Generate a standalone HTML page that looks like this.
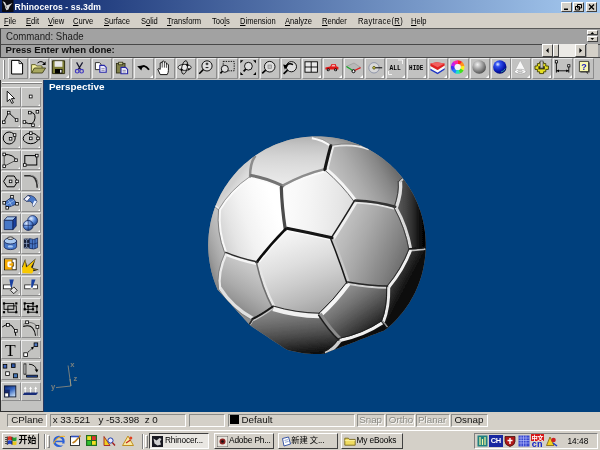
<!DOCTYPE html>
<html><head><meta charset="utf-8"><title>Rhinoceros - ss.3dm</title>
<style>
*{margin:0;padding:0;box-sizing:border-box}
html,body{width:600px;height:450px;overflow:hidden;background:#d4d0c8;font-family:"Liberation Sans","Noto Sans CJK SC",sans-serif;}
#root{position:relative;width:600px;height:450px;overflow:hidden;background:#d4d0c8;will-change:transform}
.abs{position:absolute}
#title{left:0;top:0;width:600px;height:13px;background:linear-gradient(90deg,#0a246a 0%,#a6caf0 100%)}
#title .t{position:absolute;left:14.6px;top:2.2px;font-weight:bold;font-size:8.6px;line-height:11px;color:#fff;white-space:nowrap;letter-spacing:0.1px}
.cap{position:absolute;top:1.6px;width:11px;height:10px;background:#d4d0c8;border:1px solid;border-color:#fff #404040 #404040 #fff}
#menu{left:0;top:13px;width:600px;height:15px;background:#d4d0c8}
#menu span{position:absolute;top:2.8px;font-size:8.7px;line-height:11px;color:#000;white-space:nowrap;transform:scaleX(0.87);transform-origin:0 0}
#menu u{text-decoration:underline;text-underline-offset:1px}
#cmd{left:0;top:28px;width:600px;height:16px;background:#a2a2a2;border-top:1px solid #585858;border-left:1px solid #404040}
#cmd span{position:absolute;left:4.5px;top:1.6px;font-size:10.3px;line-height:12px;color:#1a1a1a;white-space:nowrap;transform:scaleX(0.935);transform-origin:0 0}
#prm{left:0;top:44px;width:600px;height:13px;background:#a2a2a2;border-top:1px solid #484848;border-left:1px solid #404040}
#prm span{position:absolute;left:4.5px;top:-1.2px;font-size:9.6px;line-height:12px;font-weight:bold;color:#111;white-space:nowrap}
#tb{left:0;top:56.5px;width:600px;height:23.5px;background:#c2c2c1;border-top:1px solid #484848}
.tbtn{position:absolute;top:0.5px;width:20px;height:20.5px;background:#c2c2c1;border:1px solid;border-color:#ececec #8c8c8c #8c8c8c #ececec;overflow:hidden}
.tbtn svg,.lbtn svg{position:absolute;left:0;top:0}
#lt{left:0;top:80px;width:43.5px;height:331.5px;background:#c3c3c1;border-left:1px solid #303030;border-right:1px solid #283860;border-bottom:1px solid #303030}
.lbtn{position:absolute;width:20.2px;height:19.8px;background:#c3c3c1;border:1px solid;border-color:#ececec #8c8c8c #8c8c8c #ececec;overflow:hidden}
#vp{left:43.5px;top:80px;width:556.5px;height:331.5px;background:#00407d;overflow:hidden}
#vp .lab{position:absolute;left:5.5px;top:0.5px;font-weight:bold;font-size:9.9px;line-height:12px;color:#fff;white-space:nowrap}
#sb{left:0;top:411.5px;width:600px;height:18px;background:#d4d0c8}
.sbox{position:absolute;top:2px;height:13.5px;border:1px solid;border-color:#8c8c88 #fff #fff #8c8c88;font-size:9.8px;line-height:9.6px;color:#111;white-space:nowrap;padding-left:4px}
.sbox.dis{color:#8a8a84;text-shadow:0.6px 0.6px 0 #fff}
#tk{left:0;top:429.5px;width:600px;height:20.5px;background:#d4d0c8;border-top:1px solid #fff}
.kbtn{position:absolute;top:2px;height:16.5px;background:#d4d0c8;border:1px solid;border-color:#fff #404040 #404040 #fff;font-size:8.3px;line-height:13px;color:#000;white-space:nowrap;overflow:hidden;letter-spacing:-0.15px}
.kbtn.dn{border-color:#404040 #fff #fff #404040;background:#e9e7e2}
.kbtn span{position:absolute;top:0.5px}
</style></head><body><div id="root">
<div id="title" class="abs"><svg class="abs" style="left:2px;top:0px" width="11.5" height="12.4" viewBox="0 0 11.5 12.4"><rect width="11.5" height="12.4" fill="#0a0a12"/><path d="M0.6 1.3L3 2.2L4.6 5.6L10.4 3L7.6 6.6L6.4 9.6L4.4 10.2L3.4 8.2L2.6 5Z" fill="#d8d8d8"/><path d="M3.4 5.6L5 8.4" stroke="#606060" stroke-width="0.7"/></svg><div class="t">Rhinoceros - ss.3dm</div><div class="cap" style="left:560.8px"><svg width="9" height="8" style="position:absolute;left:0;top:0"><rect x="2" y="5.5" width="4" height="1.5" fill="#000"/></svg></div><div class="cap" style="left:572.6px"><svg width="9" height="8" style="position:absolute;left:0;top:0"><path d="M3.5 1.5h4v3.5h-4zM1.5 3.5h4v3.5h-4z" fill="#d4d0c8" stroke="#000" stroke-width="1"/></svg></div><div class="cap" style="left:586px"><svg width="9" height="8" style="position:absolute;left:0;top:0"><path d="M2 1.5L7 6.5M7 1.5L2 6.5" stroke="#000" stroke-width="1.3"/></svg></div></div>
<div id="menu" class="abs"><span style="left:4px"><u>F</u>ile</span><span style="left:25.5px"><u>E</u>dit</span><span style="left:48px"><u>V</u>iew</span><span style="left:73px"><u>C</u>urve</span><span style="left:104px"><u>S</u>urface</span><span style="left:141px">S<u>o</u>lid</span><span style="left:166.5px"><u>T</u>ransform</span><span style="left:212px">Too<u>l</u>s</span><span style="left:239.5px"><u>D</u>imension</span><span style="left:284.5px"><u>A</u>nalyze</span><span style="left:322px"><u>R</u>ender</span><span style="left:357.5px"><span style="position:static;letter-spacing:0.45px;transform:none">Raytrace(<u>R</u>)</span></span><span style="left:410.5px"><u>H</u>elp</span></div>
<div id="cmd" class="abs"><span>Command: Shade</span><div class="abs" style="left:586.3px;top:0.7px;width:10.5px;height:5.6px;background:#d4d0c8;border:1px solid;border-color:#fff #404040 #404040 #fff;"><svg class="abs" style="left:0px;top:0px" width="9" height="4" viewBox="0 0 9 4"><path d="M2.5 3L4.3 1L6.1 3Z" fill="#000"/></svg></div><div class="abs" style="left:586.3px;top:7px;width:10.5px;height:5.6px;background:#d4d0c8;border:1px solid;border-color:#fff #404040 #404040 #fff;"><svg class="abs" style="left:0px;top:0px" width="9" height="4" viewBox="0 0 9 4"><path d="M2.5 1L4.3 3L6.1 1Z" fill="#000"/></svg></div></div>
<div id="prm" class="abs"><span>Press Enter when done:</span><div class="abs" style="left:540.5px;top:-0.6px;width:11px;height:13px;background:#d4d0c8;border:1px solid;border-color:#fff #404040 #404040 #fff;"><svg class="abs" style="left:0px;top:0px" width="9" height="11" viewBox="0 0 9 11"><path d="M5.6 3L3 5.5L5.6 8Z" fill="#000"/></svg></div><div class="abs" style="left:551.5px;top:-0.6px;width:23px;height:13px;background:#eceae6"></div><div class="abs" style="left:552.3px;top:-0.6px;width:5.5px;height:13px;background:#d4d0c8;border:1px solid;border-color:#fff #404040 #404040 #fff;"></div><div class="abs" style="left:574.3px;top:-0.6px;width:11px;height:13px;background:#d4d0c8;border:1px solid;border-color:#fff #404040 #404040 #fff;"><svg class="abs" style="left:0px;top:0px" width="9" height="11" viewBox="0 0 9 11"><path d="M3.4 3L6 5.5L3.4 8Z" fill="#000"/></svg></div><div class="abs" style="left:586.3px;top:-0.6px;width:10.7px;height:13px;background:#d4d0c8"></div></div>
<div id="tb" class="abs"><div class="abs" style="left:2.5px;top:2px;width:2px;height:19px;border-left:1px solid #fff;border-right:1px solid #808080"></div><div class="tbtn" style="left:8.20px"><svg width="20" height="20" viewBox="0 0 20 20"><path d="M2.6 1.4H10L13.6 4.6V15H2.6Z" fill="#fff" stroke="#000" stroke-width="1"/><path d="M10 1.4V4.6H13.6" fill="none" stroke="#000" stroke-width="0.8"/></svg></div><div class="tbtn" style="left:29.17px"><svg width="20" height="20" viewBox="0 0 20 20"><path d="M1.6 14V5.6H5.4L6.6 7H12V9" fill="#f4f0a0" stroke="#5a5a20" stroke-width="0.9"/><path d="M1.6 14L4.4 9H15.6L12.4 14Z" fill="#a8a860" stroke="#404018" stroke-width="0.9"/><path d="M7.5 4Q11 1 14 4.2" fill="none" stroke="#000" stroke-width="1"/><path d="M15.6 2.4V6H12Z" fill="#000"/></svg></div><div class="tbtn" style="left:50.14px"><svg width="20" height="20" viewBox="0 0 20 20"><path d="M1.4 1.8H13.6V14.6H1.4Z" fill="#80803a" stroke="#303010" stroke-width="1"/><rect x="3.6" y="2.2" width="7.8" height="5.6" fill="#e8e8e8"/><rect x="4" y="10" width="7.4" height="4.4" fill="#000"/><rect x="9" y="10.8" width="1.6" height="2.8" fill="#e8e8e8"/><path d="M19 15V19H15Z" fill="#fff"/></svg></div><div class="tbtn" style="left:71.11px"><svg width="20" height="20" viewBox="0 0 20 20"><path d="M4.6 3.4L8.6 10.6M10.6 3.4L6.2 10.6" stroke="#181830" stroke-width="1.2" fill="none"/><circle cx="5.2" cy="12.2" r="1.8" fill="none" stroke="#4038c0" stroke-width="1.2"/><circle cx="9.6" cy="12.2" r="1.8" fill="none" stroke="#4038c0" stroke-width="1.2"/></svg></div><div class="tbtn" style="left:92.08px"><svg width="20" height="20" viewBox="0 0 20 20"><path d="M2.4 3.6H6.4L8 5.2V10.6H2.4Z" fill="#fff" stroke="#202020" stroke-width="0.9"/><path d="M6.8 6.4H11.2L13.2 8.4V13.2H6.8Z" fill="#e8e8f8" stroke="#2828a8" stroke-width="1.1"/><path d="M8.4 9.6h3.2M8.4 11.4h3.2" stroke="#707090" stroke-width="0.7"/></svg></div><div class="tbtn" style="left:113.05px"><svg width="20" height="20" viewBox="0 0 20 20"><rect x="2.4" y="4.4" width="8.6" height="9.6" fill="#808048" stroke="#303018" stroke-width="0.9"/><rect x="4.6" y="3.2" width="4.2" height="2.6" fill="#c8c890" stroke="#303018" stroke-width="0.8"/><path d="M7 8.4H11.6L13.6 10.4V14.8H7Z" fill="#e8e8f8" stroke="#2828a8" stroke-width="1.1"/><path d="M8.6 11.4h3.2M8.6 13h3.2" stroke="#707090" stroke-width="0.7"/></svg></div><div class="tbtn" style="left:134.02px"><svg width="20" height="20" viewBox="0 0 20 20"><path d="M5.5 9.2Q9 4.2 14 10.8" fill="none" stroke="#000" stroke-width="1.9"/><path d="M2.2 7.2L7.6 6.4L6.4 11.6Z" fill="#000"/><path d="M19 15V19H15Z" fill="#fff"/></svg></div><div class="tbtn" style="left:154.99px"><svg width="20" height="20" viewBox="0 0 20 20"><path d="M4.2 15.6L1.8 10.2Q2.6 8.8 4.2 10.4V4Q5.2 2.8 6.2 4V2.6Q7.2 1.4 8.4 2.6V3.4Q9.6 2.4 10.4 3.8V5Q11.8 4.4 12.4 5.8V11.4Q12.4 13.6 11.2 15.6Z" fill="#fff" stroke="#000" stroke-width="0.9"/><path d="M6.2 4V8.6M8.4 3.4V8.6M10.4 5V8.8" stroke="#000" stroke-width="0.7"/></svg></div><div class="tbtn" style="left:175.96px"><svg width="20" height="20" viewBox="0 0 20 20"><ellipse cx="7.6" cy="8.4" rx="6.6" ry="3" fill="#e8e8e8" stroke="#000" stroke-width="0.8"/><ellipse cx="7.6" cy="8.4" rx="2.8" ry="6.8" fill="none" stroke="#000" stroke-width="0.8" transform="rotate(12 7.6 8.4)"/><path d="M9.6 4.4L12 6.6L9.2 7.2Z M3.4 9.6L6.2 10.2L4 12.2Z M10.8 9.2L13.6 9.6 L11.4 11.6Z" fill="#000"/></svg></div><div class="tbtn" style="left:196.93px"><svg width="20" height="20" viewBox="0 0 20 20"><circle cx="9.0" cy="6.9" r="5.1" fill="#dedede" stroke="#000" stroke-width="0.9"/><path d="M9 3.6V6.2M7.6 4.9H10.4M7.6 8.6H10.4" stroke="#000" stroke-width="0.9"/><path d="M5.4 10.5L1.2 14.8" stroke="#000" stroke-width="1.6"/></svg></div><div class="tbtn" style="left:217.90px"><svg width="20" height="20" viewBox="0 0 20 20"><rect x="4.2" y="2.4" width="11" height="9.4" fill="none" stroke="#000" stroke-width="0.9" stroke-dasharray="1.4 1.1"/><circle cx="5.8" cy="9.8" r="3.5" fill="#dedede" stroke="#000" stroke-width="0.9"/><path d="M3.4 12.3L1.4 14.4" stroke="#000" stroke-width="1.6"/></svg></div><div class="tbtn" style="left:238.87px"><svg width="20" height="20" viewBox="0 0 20 20"><path d="M0.4 1.2H3.4L0.4 4.2Z M16 1.2H13L16 4.2Z M0.4 16H3.4L0.4 13Z M16 16H13L16 13Z" fill="#000"/><circle cx="8.4" cy="7.2" r="3.9" fill="#dedede" stroke="#000" stroke-width="0.9"/><path d="M5.8 10.1L3.6 12.4" stroke="#000" stroke-width="1.6"/></svg></div><div class="tbtn" style="left:259.84px"><svg width="20" height="20" viewBox="0 0 20 20"><circle cx="8.7" cy="7.7" r="5.3" fill="#dedede" stroke="#000" stroke-width="0.9"/><rect x="7" y="6" width="3.4" height="3.4" fill="#c0c0c0" stroke="#888" stroke-width="0.7"/><path d="M4.7 11.2L1.2 14.4" stroke="#000" stroke-width="1.6"/></svg></div><div class="tbtn" style="left:280.81px"><svg width="20" height="20" viewBox="0 0 20 20"><circle cx="9.4" cy="7.7" r="5.1" fill="#dedede" stroke="#000" stroke-width="0.9"/><path d="M5.6 11.1L1.6 14.8" stroke="#000" stroke-width="1.6"/><path d="M3.2 8.6Q6 3 11 5.6" fill="none" stroke="#000" stroke-width="1.6"/><path d="M1.2 5.4L6.4 6.6L2.8 10.4Z" fill="#000"/></svg></div><div class="tbtn" style="left:301.78px"><svg width="20" height="20" viewBox="0 0 20 20"><rect x="2" y="2.8" width="12.4" height="10.4" fill="#e8e8e8" stroke="#000" stroke-width="0.9"/><path d="M8.2 2.8V13.2M2 8H14.4" stroke="#000" stroke-width="0.9"/><path d="M19 15V19H15Z" fill="#fff"/></svg></div><div class="tbtn" style="left:322.75px"><svg width="20" height="20" viewBox="0 0 20 20"><path d="M1.4 10.6V8.4L6.2 7.6L7.6 5H11.6L12.6 7.6L14.4 8V10.6Z" fill="#e01818"/><path d="M8.2 5.8H10.8L11.4 7.6H7.4Z" fill="#f8b0b0"/><circle cx="4.2" cy="10.8" r="1.5" fill="#101010"/><circle cx="11.6" cy="10.8" r="1.5" fill="#101010"/><circle cx="4.2" cy="10.8" r="0.6" fill="#ddd"/><circle cx="11.6" cy="10.8" r="0.6" fill="#ddd"/><path d="M19 15V19H15Z" fill="#fff"/></svg></div><div class="tbtn" style="left:343.72px"><svg width="20" height="20" viewBox="0 0 20 20"><path d="M1.4 7.4L9 4L15.6 8.4L8.4 12.2Z" fill="#b8b8b8" stroke="#909090" stroke-width="0.6"/><path d="M1.4 7.4L8.5 12" stroke="#18a828" stroke-width="1.2"/><path d="M8.5 12L15.6 8.6" stroke="#e02020" stroke-width="1.2"/><circle cx="8.5" cy="12.2" r="1.5" fill="#fff" stroke="#000" stroke-width="1"/><path d="M19 15V19H15Z" fill="#fff"/></svg></div><div class="tbtn" style="left:364.69px"><svg width="20" height="20" viewBox="0 0 20 20"><circle cx="8" cy="8.8" r="5.2" fill="#d8d8d8" stroke="#8088a0" stroke-width="0.8"/><circle cx="8" cy="8.8" r="1.3" fill="#e8e060" stroke="#404000" stroke-width="0.8"/><path d="M9.4 8.8H16.2" stroke="#000" stroke-width="1"/><path d="M19 15V19H15Z" fill="#fff"/></svg></div><div class="tbtn" style="left:385.66px"><svg width="20" height="20" viewBox="0 0 20 20"><text x="8.2" y="11.2" font-family="Liberation Mono, monospace" font-weight="bold" font-size="7.2" text-anchor="middle" fill="#000" textLength="11.4" lengthAdjust="spacingAndGlyphs">ALL</text><path d="M11 1H15.5V5" fill="none" stroke="#fff" stroke-width="0.8"/><path d="M1.5 12V15.5H5" fill="none" stroke="#fff" stroke-width="0.8"/><path d="M19 15V19H15Z" fill="#fff"/></svg></div><div class="tbtn" style="left:406.63px"><svg width="20" height="20" viewBox="0 0 20 20"><text x="8.2" y="11.2" font-family="Liberation Mono, monospace" font-weight="bold" font-size="7.2" text-anchor="middle" fill="#000" textLength="14.2" lengthAdjust="spacingAndGlyphs">HIDE</text><path d="M19 15V19H15Z" fill="#fff"/></svg></div><div class="tbtn" style="left:427.60px"><svg width="20" height="20" viewBox="0 0 20 20"><path d="M1.4 9.4L8.6 13.4L15.6 9V10.8L8.6 15.2L1.4 11.2Z" fill="#2038c8"/><path d="M1.4 7L8.6 11L15.6 6.6V9L8.6 13.4L1.4 9.4Z" fill="#f8f8f8"/><path d="M1.4 4.6L7.6 3.2L15.6 4.4V6.6L8.6 11L1.4 7Z" fill="#e02020"/><path d="M1.4 4.6L7.6 3.2L15.6 4.4L8.6 8.2Z" fill="#f06060"/><path d="M19 15V19H15Z" fill="#fff"/></svg></div><div class="tbtn" style="left:448.57px"><svg width="20" height="20" viewBox="0 0 20 20"><path d="M7.70 1.20A6.8 6.8 0 0 1 12.33 3.02L9.81 5.73A3.1 3.1 0 0 0 7.70 4.90Z" fill="#ff2020"/><path d="M12.07 2.79A6.8 6.8 0 0 1 14.45 7.16L10.78 7.61A3.1 3.1 0 0 0 9.69 5.63Z" fill="#ff9020"/><path d="M14.40 6.82A6.8 6.8 0 0 1 13.41 11.69L10.30 9.68A3.1 3.1 0 0 0 10.75 7.46Z" fill="#f8f020"/><path d="M13.59 11.40A6.8 6.8 0 0 1 9.70 14.50L8.61 10.96A3.1 3.1 0 0 0 10.38 9.55Z" fill="#40e020"/><path d="M10.03 14.39A6.8 6.8 0 0 1 5.06 14.27L6.50 10.86A3.1 3.1 0 0 0 8.76 10.91Z" fill="#20e0c0"/><path d="M5.37 14.39A6.8 6.8 0 0 1 1.65 11.10L4.94 9.41A3.1 3.1 0 0 0 6.64 10.91Z" fill="#2080ff"/><path d="M1.81 11.40A6.8 6.8 0 0 1 1.07 6.49L4.68 7.31A3.1 3.1 0 0 0 5.02 9.55Z" fill="#4030f0"/><path d="M1.00 6.82A6.8 6.8 0 0 1 3.59 2.58L5.83 5.53A3.1 3.1 0 0 0 4.65 7.46Z" fill="#c020f0"/><path d="M3.33 2.79A6.8 6.8 0 0 1 8.04 1.21L7.85 4.90A3.1 3.1 0 0 0 5.71 5.63Z" fill="#ff20a0"/><circle cx="7.7" cy="8" r="3.1" fill="#f4f4f4"/><path d="M19 15V19H15Z" fill="#fff"/></svg></div><div class="tbtn" style="left:469.54px"><svg width="20" height="20" viewBox="0 0 20 20"><defs><radialGradient id="gs" cx="0.38" cy="0.32" r="0.7"><stop offset="0" stop-color="#f0f0f0"/><stop offset="0.5" stop-color="#a0a0a0"/><stop offset="1" stop-color="#505050"/></radialGradient></defs><circle cx="8.2" cy="8" r="6.8" fill="url(#gs)"/><path d="M19 15V19H15Z" fill="#fff"/></svg></div><div class="tbtn" style="left:490.51px"><svg width="20" height="20" viewBox="0 0 20 20"><defs><radialGradient id="bs" cx="0.35" cy="0.3" r="0.75"><stop offset="0" stop-color="#e8f0ff"/><stop offset="0.25" stop-color="#3050f0"/><stop offset="0.7" stop-color="#0818b0"/><stop offset="1" stop-color="#000860"/></radialGradient></defs><circle cx="7.8" cy="8" r="6.7" fill="url(#bs)"/><path d="M9 13Q12 12.4 13.2 9.6" stroke="#30a0a0" stroke-width="0.9" fill="none"/><path d="M19 15V19H15Z" fill="#fff"/></svg></div><div class="tbtn" style="left:511.48px"><svg width="20" height="20" viewBox="0 0 20 20"><path d="M8.2 1.2L2.4 12.6Q8.2 16.4 14.2 12.6Z" fill="#f8f8f8" stroke="#b0b0b0" stroke-width="0.6"/><ellipse cx="8.2" cy="12.6" rx="5.8" ry="2.3" fill="#fff" stroke="#a0a0a0" stroke-width="0.7"/><ellipse cx="8.2" cy="12.6" rx="2.8" ry="1" fill="#e0e0e0" stroke="#909090" stroke-width="0.6"/><path d="M19 15V19H15Z" fill="#fff"/></svg></div><div class="tbtn" style="left:532.45px"><svg width="20" height="20" viewBox="0 0 20 20"><path d="M2 7H4.4V4.6H6.6V3H10.6V4.6H12.8V7H15.4V10.4H12.8V12.8H10.6V14.6H6.6V12.8H4.4V10.4H2Z" fill="#e8e020" stroke="#404000" stroke-width="0.9"/><rect x="5.4" y="7.2" width="6.4" height="3.2" fill="#303010"/><rect x="7.2" y="2" width="2.8" height="7" fill="#c8c8c8" stroke="#505050" stroke-width="0.7"/><path d="M19 15V19H15Z" fill="#fff"/></svg></div><div class="tbtn" style="left:553.42px"><svg width="20" height="20" viewBox="0 0 20 20"><path d="M2.4 3.6V13.6M14.8 7.6V13.6M2.4 11.8H14.8" stroke="#000" stroke-width="0.9" fill="none"/><path d="M2.6 11.8L5 10.4V13.2Z M14.6 11.8L12.2 10.4V13.2Z" fill="#000"/><rect x="1.3" y="1.7" width="2.2" height="2.2" fill="#fff" stroke="#000" stroke-width="0.8"/><rect x="13.7" y="5.7" width="2.2" height="2.2" fill="#fff" stroke="#000" stroke-width="0.8"/><path d="M19 15V19H15Z" fill="#fff"/></svg></div><div class="tbtn" style="left:574.39px"><svg width="20" height="20" viewBox="0 0 20 20"><path d="M5.4 3.4H14.6V13.6H12.8L13.4 15.4L11 13.6H5.4Z" fill="#404040"/><path d="M4.4 2.4H13.6V12.6H4.4Z" fill="#f8f8b0" stroke="#202020" stroke-width="0.8"/><text x="9" y="11" font-family="Liberation Sans, sans-serif" font-weight="bold" font-size="9" text-anchor="middle" fill="#2020c0">?</text></svg></div></div>
<div id="lt" class="abs"><div class="abs" style="left:0.5px;top:1.5px;width:40px;height:2px;border-top:1px solid #fff;border-bottom:1px solid #808080"></div><div class="lbtn" style="left:-0.20px;top:7.00px"><svg width="20" height="20" viewBox="0 0 20 20"><path d="M5.2 3.2V13.6L7.8 11.2L9.8 15.4L11.4 14.6L9.4 10.6H12.6Z" fill="#fff" stroke="#000" stroke-width="0.9"/></svg></div><div class="lbtn" style="left:20.25px;top:7.00px"><svg width="20" height="20" viewBox="0 0 20 20"><rect x="7.3" y="7.1" width="2.8" height="2.8" fill="#fff" stroke="#000" stroke-width="0.8"/><path d="M19 15V19H15Z" fill="#fff"/></svg></div><div class="lbtn" style="left:-0.20px;top:28.05px"><svg width="20" height="20" viewBox="0 0 20 20"><path d="M1.6 13.4L6.7 3.6L14.6 11" stroke="#000" fill="none" stroke-width="0.9"/><rect x="0.5" y="11.9" width="2.6" height="2.6" fill="#fff" stroke="#000" stroke-width="0.8"/><rect x="5.4" y="2.3" width="2.6" height="2.6" fill="#fff" stroke="#000" stroke-width="0.8"/><rect x="13.3" y="9.7" width="2.6" height="2.6" fill="#fff" stroke="#000" stroke-width="0.8"/><path d="M19 15V19H15Z" fill="#fff"/></svg></div><div class="lbtn" style="left:20.25px;top:28.05px"><svg width="20" height="20" viewBox="0 0 20 20"><path d="M2.4 13Q12 18 13 9Q13.4 3 7.8 3.6" stroke="#000" fill="none" stroke-width="1"/><rect x="1.1" y="11.7" width="2.6" height="2.6" fill="#fff" stroke="#000" stroke-width="0.8"/><rect x="9.7" y="14.9" width="2.6" height="2.6" fill="#fff" stroke="#000" stroke-width="0.8"/><rect x="14.1" y="1.5" width="2.6" height="2.6" fill="#fff" stroke="#000" stroke-width="0.8"/><rect x="6.5" y="2.3" width="2.6" height="2.6" fill="#fff" stroke="#000" stroke-width="0.8"/><path d="M19 15V19H15Z" fill="#fff"/></svg></div><div class="lbtn" style="left:-0.20px;top:49.10px"><svg width="20" height="20" viewBox="0 0 20 20"><circle cx="7.2" cy="8" r="6" stroke="#000" fill="none" stroke-width="1"/><rect x="7.3" y="7.5" width="2.6" height="2.6" fill="#fff" stroke="#000" stroke-width="0.8"/><rect x="11.3" y="3.7" width="2.6" height="2.6" fill="#fff" stroke="#000" stroke-width="0.8"/><path d="M19 15V19H15Z" fill="#fff"/></svg></div><div class="lbtn" style="left:20.25px;top:49.10px"><svg width="20" height="20" viewBox="0 0 20 20"><ellipse cx="8.8" cy="8.4" rx="7.6" ry="5.3" stroke="#000" fill="none" stroke-width="1"/><rect x="7.5" y="7.1" width="2.6" height="2.6" fill="#fff" stroke="#000" stroke-width="0.8"/><rect x="7.5" y="1.8" width="2.6" height="2.6" fill="#fff" stroke="#000" stroke-width="0.8"/><rect x="14.7" y="7.1" width="2.6" height="2.6" fill="#fff" stroke="#000" stroke-width="0.8"/><path d="M19 15V19H15Z" fill="#fff"/></svg></div><div class="lbtn" style="left:-0.20px;top:70.15px"><svg width="20" height="20" viewBox="0 0 20 20"><path d="M2.2 3.4Q12 3.4 14 9.2" stroke="#000" fill="none" stroke-width="1"/><path d="M2.2 3.4V15.2L14 9.2" stroke="#000" fill="none" stroke-width="0.6"/><rect x="0.9" y="2.1" width="2.6" height="2.6" fill="#fff" stroke="#000" stroke-width="0.8"/><rect x="0.9" y="13.9" width="2.6" height="2.6" fill="#fff" stroke="#000" stroke-width="0.8"/><rect x="12.7" y="7.9" width="2.6" height="2.6" fill="#fff" stroke="#000" stroke-width="0.8"/><path d="M19 15V19H15Z" fill="#fff"/></svg></div><div class="lbtn" style="left:20.25px;top:70.15px"><svg width="20" height="20" viewBox="0 0 20 20"><rect x="2.8" y="4.6" width="12" height="9.4" stroke="#000" fill="none" stroke-width="1"/><rect x="1.5" y="12.7" width="2.6" height="2.6" fill="#fff" stroke="#000" stroke-width="0.8"/><rect x="13.5" y="3.3" width="2.6" height="2.6" fill="#fff" stroke="#000" stroke-width="0.8"/><path d="M19 15V19H15Z" fill="#fff"/></svg></div><div class="lbtn" style="left:-0.20px;top:91.20px"><svg width="20" height="20" viewBox="0 0 20 20"><path d="M1.6 9.4L5 4H12.2L15.6 9.4L12.2 14.8H5Z" stroke="#000" fill="none" stroke-width="1"/><rect x="7.3" y="8.1" width="2.6" height="2.6" fill="#fff" stroke="#000" stroke-width="0.8"/><rect x="13.7" y="8.1" width="2.6" height="2.6" fill="#fff" stroke="#000" stroke-width="0.8"/><path d="M19 15V19H15Z" fill="#fff"/></svg></div><div class="lbtn" style="left:20.25px;top:91.20px"><svg width="20" height="20" viewBox="0 0 20 20"><path d="M2.2 3.8H8Q15 4 15.2 15.8" fill="none" stroke="#303030" stroke-width="1.5"/><path d="M8.6 3.2Q15.8 4 16 12" fill="none" stroke="#909090" stroke-width="1"/><path d="M19 15V19H15Z" fill="#fff"/></svg></div><div class="lbtn" style="left:-0.20px;top:112.25px"><svg width="20" height="20" viewBox="0 0 20 20"><path d="M2.2 9.8L10 3.8L15 10.8L5.2 14.8Z" fill="#4878c8" stroke="#102050" stroke-width="0.8"/><path d="M6 6.8L10 12.8M3.6 12.2L12.4 7.2" stroke="#c0d8f8" stroke-width="0.6"/><rect x="0.9" y="8.5" width="2.6" height="2.6" fill="#fff" stroke="#000" stroke-width="0.8"/><rect x="8.7" y="2.5" width="2.6" height="2.6" fill="#fff" stroke="#000" stroke-width="0.8"/><rect x="13.7" y="9.5" width="2.6" height="2.6" fill="#fff" stroke="#000" stroke-width="0.8"/><rect x="3.9" y="13.5" width="2.6" height="2.6" fill="#fff" stroke="#000" stroke-width="0.8"/><path d="M19 15V19H15Z" fill="#fff"/></svg></div><div class="lbtn" style="left:20.25px;top:112.25px"><svg width="20" height="20" viewBox="0 0 20 20"><path d="M1.8 6.2L6 2.4Q13 2 14.8 8.6L11.4 13.8Q10.6 7 5 8.4Z" fill="#4878c8" stroke="#102050" stroke-width="0.7"/><path d="M1.8 6.2L6 2.4L8.6 4.2L5 8.4Z" fill="#f4f4ff" stroke="#102050" stroke-width="0.6"/><path d="M11.4 13.8L14.8 8.6L12.6 7.6L10.6 11Z" fill="#e8f0ff"/><path d="M19 15V19H15Z" fill="#fff"/></svg></div><div class="lbtn" style="left:-0.20px;top:133.30px"><svg width="20" height="20" viewBox="0 0 20 20"><path d="M2.2 6.2H11V15.6H2.2Z" fill="#4878c8" stroke="#102050" stroke-width="0.8"/><path d="M2.2 6.2L5.2 2.8H14.2L11 6.2Z" fill="#a8c8f0" stroke="#102050" stroke-width="0.8"/><path d="M11 6.2L14.2 2.8V12L11 15.6Z" fill="#1840a0" stroke="#102050" stroke-width="0.8"/><path d="M19 15V19H15Z" fill="#fff"/></svg></div><div class="lbtn" style="left:20.25px;top:133.30px"><svg width="20" height="20" viewBox="0 0 20 20"><defs><radialGradient id="sp" cx="0.35" cy="0.3" r="0.8"><stop offset="0" stop-color="#e0ecff"/><stop offset="0.5" stop-color="#5888d8"/><stop offset="1" stop-color="#183878"/></radialGradient></defs><circle cx="10.6" cy="6.6" r="5" fill="url(#sp)" stroke="#102050" stroke-width="0.7"/><circle cx="6.2" cy="11.4" r="5" fill="url(#sp)" stroke="#102050" stroke-width="0.7"/><path d="M6.2 6.4V16.4M1.2 11.4H11.2" stroke="#102050" stroke-width="0.6"/><path d="M19 15V19H15Z" fill="#fff"/></svg></div><div class="lbtn" style="left:-0.20px;top:154.35px"><svg width="20" height="20" viewBox="0 0 20 20"><path d="M2.2 6V11.6A6.2 3 0 0 0 14.6 11.6V6Z" fill="#4878c8" stroke="#102050" stroke-width="0.8"/><ellipse cx="8.4" cy="6" rx="6.2" ry="3" fill="#a8c8f0" stroke="#102050" stroke-width="0.8"/><ellipse cx="8.4" cy="3.2" rx="3" ry="1.3" fill="#d8d8d8" stroke="#202020" stroke-width="0.8"/><ellipse cx="8.4" cy="11.4" rx="2.6" ry="1.2" fill="#a8c8f0"/><path d="M19 15V19H15Z" fill="#fff"/></svg></div><div class="lbtn" style="left:20.25px;top:154.35px"><svg width="20" height="20" viewBox="0 0 20 20"><path d="M1.8 3.6H7.6V13.4H1.8Z" fill="#182038"/><path d="M1.8 3.6L4.6 5V12L1.8 13.4M7.6 3.6L4.6 5M7.6 13.4L4.6 12M1.8 8.4H7.6" stroke="#a8c0e8" stroke-width="0.6" fill="none"/><path d="M7.6 3.6Q12 5.6 15.6 3V12.6Q12 15 7.6 13.4Z" fill="#4878c8" stroke="#102050" stroke-width="0.7"/><path d="M10.4 4.6V14M13 4.2V13.8M7.6 8.4Q12 10 15.6 7.8" stroke="#102050" stroke-width="0.6" fill="none"/><path d="M19 15V19H15Z" fill="#fff"/></svg></div><div class="lbtn" style="left:-0.20px;top:175.40px"><svg width="20" height="20" viewBox="0 0 20 20"><rect x="2.5" y="3" width="11.7" height="10.8" fill="#fff" stroke="#201800" stroke-width="0.9"/><path d="M2.9 3.4H10.2V6.4H11.6V10.2H10.2V13.4H2.9Z" fill="#f4a800"/><path d="M9.4 5.6H7Q5.4 5.6 5.4 7V9.6Q5.4 11.2 7 11.2H9.4V9.4H7.4V7.4H9.4Z" fill="#fff"/><path d="M10.2 3.4V6.4H11.6V10.2H10.2V13.4" fill="none" stroke="#201800" stroke-width="0.6"/><path d="M19 15V19H15Z" fill="#fff"/></svg></div><div class="lbtn" style="left:20.25px;top:175.40px"><svg width="20" height="20" viewBox="0 0 20 20"><path d="M0.4 17L0.2 11.3L3.2 3.5L5.1 10.3L13.5 3L10.5 12.3L16.4 13.8L11.4 15.2L10 17.6Z" fill="#f8c800"/><path d="M3.2 3.5L5.1 10.3L4 11.6Z M13.5 3L10.5 12.3L9 11.2Z M16.4 13.8L11.4 15.2L11 13.6Z" fill="#181830"/><path d="M0.2 11.3L3.2 3.5M5.1 10.3L13.5 3M10.5 12.3L16.4 13.8" stroke="#202020" stroke-width="0.7" fill="none"/><path d="M19 15V19H15Z" fill="#fff"/></svg></div><div class="lbtn" style="left:-0.20px;top:196.45px"><svg width="20" height="20" viewBox="0 0 20 20"><rect x="1.5" y="7.9" width="7.9" height="3.9" fill="#fff" stroke="#202020" stroke-width="0.8"/><path d="M7.4 2.5H11.8L9.8 9.9H8.7Z" fill="#1840a0"/><path d="M11.8 9.9L15.2 13.3L11.8 16.7L8.4 13.3Z" fill="#e4e4e4" stroke="#000" stroke-width="0.8"/><path d="M19 15V19H15Z" fill="#fff"/></svg></div><div class="lbtn" style="left:20.25px;top:196.45px"><svg width="20" height="20" viewBox="0 0 20 20"><rect x="2.7" y="7.9" width="12.7" height="3.9" fill="#fff" stroke="#202020" stroke-width="0.8"/><rect x="8.6" y="7.4" width="2.2" height="5" fill="#d4d0c8"/><path d="M9.5 2.5H13.5L10.5 10.4H9.1Z" fill="#1840a0"/><path d="M19 15V19H15Z" fill="#fff"/></svg></div><div class="lbtn" style="left:-0.20px;top:217.50px"><svg width="20" height="20" viewBox="0 0 20 20"><rect x="2" y="4.4" width="9.8" height="5.9" fill="none" stroke="#000" stroke-width="0.9"/><rect x="5.9" y="6.9" width="8.4" height="6.3" fill="none" stroke="#000" stroke-width="0.9"/><rect x="0.9" y="3.3" width="2.2" height="2.2" fill="#000"/><rect x="13.2" y="3.3" width="2.2" height="2.2" fill="#000"/><rect x="0.9" y="12.1" width="2.2" height="2.2" fill="#000"/><rect x="13.2" y="12.1" width="2.2" height="2.2" fill="#000"/><path d="M19 15V19H15Z" fill="#fff"/></svg></div><div class="lbtn" style="left:20.25px;top:217.50px"><svg width="20" height="20" viewBox="0 0 20 20"><rect x="2.7" y="4.4" width="8.3" height="5.9" fill="none" stroke="#000" stroke-width="0.9"/><rect x="6.1" y="7.3" width="8.8" height="5.9" fill="none" stroke="#000" stroke-width="0.9"/><rect x="1.6" y="3.3" width="2.2" height="2.2" fill="#000"/><rect x="9.9" y="3.3" width="2.2" height="2.2" fill="#000"/><rect x="1.6" y="9.2" width="2.2" height="2.2" fill="#000"/><rect x="9.9" y="9.2" width="2.2" height="2.2" fill="#000"/><rect x="5.0" y="6.2" width="2.2" height="2.2" fill="#000"/><rect x="13.8" y="6.2" width="2.2" height="2.2" fill="#000"/><rect x="5.0" y="12.1" width="2.2" height="2.2" fill="#000"/><rect x="13.8" y="12.1" width="2.2" height="2.2" fill="#000"/><path d="M19 15V19H15Z" fill="#fff"/></svg></div><div class="lbtn" style="left:-0.20px;top:238.55px"><svg width="20" height="20" viewBox="0 0 20 20"><path d="M0.2 7Q6 2.6 10 6Q13.6 9 13.8 15.8" stroke="#000" fill="none" stroke-width="1"/><rect x="4.5" y="3.5" width="2.8" height="2.8" fill="#fff" stroke="#000" stroke-width="0.8"/><rect x="12.4" y="9.4" width="2.8" height="2.8" fill="#fff" stroke="#000" stroke-width="0.8"/><path d="M19 15V19H15Z" fill="#fff"/></svg></div><div class="lbtn" style="left:20.25px;top:238.55px"><svg width="20" height="20" viewBox="0 0 20 20"><path d="M1.2 6.4Q8 4.6 10.6 8Q13.2 11 13.5 15.8" stroke="#000" fill="none" stroke-width="1.1"/><path d="M1.2 4.4Q5 1.6 9 2.6Q14.8 4 15.4 8V15.8" fill="none" stroke="#505050" stroke-width="0.7"/><rect x="3.7" y="0.9" width="2.8" height="2.8" fill="#fff" stroke="#000" stroke-width="0.8"/><rect x="14.0" y="5.5" width="2.8" height="2.8" fill="#fff" stroke="#000" stroke-width="0.8"/><path d="M19 15V19H15Z" fill="#fff"/></svg></div><div class="lbtn" style="left:-0.20px;top:259.60px"><svg width="20" height="20" viewBox="0 0 20 20"><text x="8.4" y="14.6" font-family="Liberation Serif, serif" font-size="17.5" text-anchor="middle" fill="#000">T</text></svg></div><div class="lbtn" style="left:20.25px;top:259.60px"><svg width="20" height="20" viewBox="0 0 20 20"><path d="M6.2 11L11 6.6" stroke="#000" stroke-width="1" stroke-dasharray="1.8 1.2"/><path d="M12 5.6L8.8 6.6L10.8 8.8Z" fill="#000"/><rect x="1.8" y="11.8" width="3.6" height="3.6" fill="#fff" stroke="#000" stroke-width="0.8"/><rect x="12.1" y="1.9" width="3.6" height="3.6" fill="#5078c0" stroke="#000" stroke-width="0.8"/><path d="M19 15V19H15Z" fill="#fff"/></svg></div><div class="lbtn" style="left:-0.20px;top:280.65px"><svg width="20" height="20" viewBox="0 0 20 20"><rect x="1.2" y="2.5" width="3.6" height="3.6" fill="#4068c0" stroke="#000" stroke-width="0.8"/><rect x="9.5" y="1.8" width="3.6" height="3.6" fill="#3058a8" stroke="#000" stroke-width="0.8"/><rect x="3.7" y="9.8" width="3.6" height="3.6" fill="#fff" stroke="#000" stroke-width="0.8"/><rect x="11.5" y="11.8" width="4.0" height="4.0" fill="#4878b8" stroke="#000" stroke-width="0.8"/><path d="M19 15V19H15Z" fill="#fff"/></svg></div><div class="lbtn" style="left:20.25px;top:280.65px"><svg width="20" height="20" viewBox="0 0 20 20"><rect x="2" y="1.9" width="1.9" height="10.3" fill="#fff" stroke="#000" stroke-width="0.8"/><rect x="4.6" y="13.2" width="10.8" height="1.9" fill="#2850b0" stroke="#000" stroke-width="0.8"/><path d="M7 2.2Q13.6 2.4 14.6 8.4" stroke="#000" fill="none" stroke-width="0.9"/><path d="M14.9 10.6L12.6 7.6L16.4 7.4Z" fill="#000"/><path d="M19 15V19H15Z" fill="#fff"/></svg></div><div class="lbtn" style="left:-0.20px;top:301.70px"><svg width="20" height="20" viewBox="0 0 20 20"><defs><linearGradient id="an" x1="0.2" y1="0" x2="0.8" y2="1"><stop offset="0" stop-color="#0c2c80"/><stop offset="0.45" stop-color="#3868c0"/><stop offset="1" stop-color="#c8e0f8"/></linearGradient></defs><rect x="2.5" y="2.9" width="11.3" height="11" fill="url(#an)" stroke="#101830" stroke-width="0.9"/><path d="M2.5 6.6H7.8V13.9H2.5Z" fill="#102060" fill-opacity="0.85"/><rect x="2.8" y="10" width="3.6" height="3.9" fill="#fff" stroke="#101830" stroke-width="0.7"/><path d="M19 15V19H15Z" fill="#fff"/></svg></div><div class="lbtn" style="left:20.25px;top:301.70px"><svg width="20" height="20" viewBox="0 0 20 20"><path d="M2.4 9.6H16.2L14.2 12H0.8Z" fill="#182c78"/><path d="M3.2 9.4V5.4M8.6 9.4V5.4M13.7 9.4V5.4" stroke="#fff" stroke-width="1"/><path d="M3.2 3.4L1.8 6H4.6Z M8.6 3.4L7.2 6H10Z M13.7 3.4L12.3 6H15.1Z" fill="#fff"/><path d="M19 15V19H15Z" fill="#fff"/></svg></div></div>
<div id="vp" class="abs"><svg class="abs" style="left:0;top:0" width="556.5" height="331.5" viewBox="43.5 80 556.5 331.5"><defs><clipPath id="bc"><path d="M425.3 245.2L425.2 249.0L425.0 252.8L424.7 256.6L424.2 260.3L423.6 264.1L422.9 267.8L422.1 271.5L421.1 275.2L420.0 278.8L418.7 282.4L417.4 286.0L415.9 289.5L414.3 292.9L412.6 296.3L410.7 299.6L408.8 302.9L406.7 306.0L404.5 309.2L402.2 312.2L399.8 315.1L397.4 318.0L394.8 320.8L392.1 323.5L389.3 326.1L386.4 328.5L383.3 330.7L379.6 332.1L376.0 333.4L372.5 334.8L369.0 336.1L365.6 337.5L362.1 338.8L358.7 340.1L355.4 341.4L352.0 342.7L348.6 344.0L345.2 345.3L341.8 346.6L338.3 347.9L334.8 349.2L331.3 350.6L327.7 352.0L324.1 353.4L320.3 353.9L316.5 354.0L312.7 353.9L308.9 353.7L305.1 353.4L301.4 352.9L297.6 352.3L293.9 351.6L290.2 350.8L286.5 349.8L283.2 347.7L280.0 345.5L276.8 343.5L273.7 341.4L270.6 339.4L267.5 337.3L264.5 335.3L261.4 333.3L258.4 331.3L255.4 329.3L252.3 327.3L249.4 325.1L247.0 322.4L244.5 319.7L242.1 317.1L239.7 314.4L237.2 311.7L234.8 309.0L232.3 306.3L229.9 303.6L227.4 300.9L224.9 298.1L222.3 295.3L219.7 292.4L217.1 289.5L215.6 286.0L214.3 282.4L213.0 278.8L211.9 275.2L210.9 271.5L210.1 267.8L209.4 264.1L208.8 260.3L208.3 256.6L208.0 252.8L207.8 249.0L207.7 245.2L207.8 241.4L208.0 237.6L208.3 233.8L208.8 230.1L209.4 226.3L210.1 222.6L210.9 218.9L211.9 215.2L213.0 211.6L214.3 208.0L215.6 204.4L217.1 200.9L218.7 197.5L220.4 194.1L222.3 190.8L224.2 187.5L226.3 184.4L228.5 181.2L230.8 178.2L233.2 175.3L235.6 172.4L238.2 169.6L240.9 166.9L243.7 164.3L246.6 161.9L249.5 159.5L252.5 157.2L255.7 155.0L258.8 152.9L262.1 151.0L265.4 149.1L268.8 147.4L272.2 145.8L275.7 144.3L279.3 143.0L282.9 141.7L286.5 140.6L290.2 139.6L293.9 138.8L297.6 138.1L301.4 137.5L305.1 137.0L308.9 136.7L312.7 136.5L316.5 136.4L320.3 136.5L324.1 136.7L327.9 137.0L331.6 137.5L335.4 138.1L339.1 138.8L342.8 139.6L346.5 140.6L350.1 141.7L353.7 143.0L357.3 144.3L360.8 145.8L364.2 147.4L367.6 149.1L370.9 151.0L374.2 152.9L377.3 155.0L380.5 157.2L383.5 159.5L386.4 161.9L389.3 164.3L392.1 166.9L394.8 169.6L397.4 172.4L399.8 175.3L402.2 178.2L404.5 181.2L406.7 184.4L408.8 187.5L410.7 190.8L412.6 194.1L414.3 197.5L415.9 200.9L417.4 204.4L418.7 208.0L420.0 211.6L421.1 215.2L422.1 218.9L422.9 222.6L423.6 226.3L424.2 230.1L424.7 233.8L425.0 237.6L425.2 241.4Z"/></clipPath><linearGradient id="g_lefthex" gradientUnits="userSpaceOnUse" x1="215.8" y1="232.7" x2="290.9" y2="206.9"><stop offset="0.00" stop-color="#cfcfcf"/><stop offset="0.20" stop-color="#e4e4e4"/><stop offset="0.40" stop-color="#f2f2f2"/><stop offset="0.60" stop-color="#fafafa"/><stop offset="0.80" stop-color="#ffffff"/><stop offset="1.00" stop-color="#ffffff"/></linearGradient><linearGradient id="g_toppent" gradientUnits="userSpaceOnUse" x1="356.1" y1="208.8" x2="278.7" y2="202.2"><stop offset="0.00" stop-color="#dadada"/><stop offset="0.20" stop-color="#e5e5e5"/><stop offset="0.40" stop-color="#ededed"/><stop offset="0.60" stop-color="#f4f4f4"/><stop offset="0.80" stop-color="#f9f9f9"/><stop offset="1.00" stop-color="#fcfcfc"/></linearGradient><linearGradient id="g_center" gradientUnits="userSpaceOnUse" x1="317.8" y1="316.9" x2="286.2" y2="227.3"><stop offset="0.00" stop-color="#9d9d9d"/><stop offset="0.20" stop-color="#b7b7b7"/><stop offset="0.40" stop-color="#cccccc"/><stop offset="0.60" stop-color="#dedede"/><stop offset="0.80" stop-color="#ececec"/><stop offset="1.00" stop-color="#f8f8f8"/></linearGradient><linearGradient id="g_righthex" gradientUnits="userSpaceOnUse" x1="406.6" y1="260.4" x2="333.8" y2="228.4"><stop offset="0.00" stop-color="#6a6a6a"/><stop offset="0.20" stop-color="#828282"/><stop offset="0.40" stop-color="#969696"/><stop offset="0.60" stop-color="#a9a9a9"/><stop offset="0.80" stop-color="#b9b9b9"/><stop offset="1.00" stop-color="#c7c7c7"/></linearGradient><linearGradient id="g_llpent" gradientUnits="userSpaceOnUse" x1="231.2" y1="308.9" x2="260.0" y2="262.5"><stop offset="0.00" stop-color="#838383"/><stop offset="0.20" stop-color="#999999"/><stop offset="0.40" stop-color="#ababab"/><stop offset="0.60" stop-color="#b9b9b9"/><stop offset="0.80" stop-color="#c6c6c6"/><stop offset="1.00" stop-color="#d1d1d1"/></linearGradient><linearGradient id="g_bottom" gradientUnits="userSpaceOnUse" x1="304.5" y1="356.5" x2="298.9" y2="302.6"><stop offset="0.00" stop-color="#060606"/><stop offset="0.20" stop-color="#2a2a2a"/><stop offset="0.40" stop-color="#4c4c4c"/><stop offset="0.60" stop-color="#676767"/><stop offset="0.80" stop-color="#7e7e7e"/><stop offset="1.00" stop-color="#919191"/></linearGradient><linearGradient id="g_lrpent" gradientUnits="userSpaceOnUse" x1="370.8" y1="331.8" x2="338.8" y2="286.2"><stop offset="0.00" stop-color="#1b1b1b"/><stop offset="0.20" stop-color="#3b3b3b"/><stop offset="0.40" stop-color="#575757"/><stop offset="0.60" stop-color="#707070"/><stop offset="0.80" stop-color="#858585"/><stop offset="1.00" stop-color="#989898"/></linearGradient><linearGradient id="g_topleft" gradientUnits="userSpaceOnUse" x1="293.4" y1="134.9" x2="292.1" y2="189.2"><stop offset="0.00" stop-color="#afafaf"/><stop offset="0.20" stop-color="#c5c5c5"/><stop offset="0.40" stop-color="#d4d4d4"/><stop offset="0.60" stop-color="#dedede"/><stop offset="0.80" stop-color="#e6e6e6"/><stop offset="1.00" stop-color="#ececec"/></linearGradient><linearGradient id="g_topright" gradientUnits="userSpaceOnUse" x1="389.7" y1="160.9" x2="334.7" y2="190.9"><stop offset="0.00" stop-color="#6c6c6c"/><stop offset="0.20" stop-color="#878787"/><stop offset="0.40" stop-color="#9b9b9b"/><stop offset="0.60" stop-color="#acacac"/><stop offset="0.80" stop-color="#b9b9b9"/><stop offset="1.00" stop-color="#c5c5c5"/></linearGradient><linearGradient id="g_upleft" gradientUnits="userSpaceOnUse" x1="236.6" y1="177.4" x2="246.4" y2="185.0"><stop offset="0.00" stop-color="#cfcfcf"/><stop offset="0.20" stop-color="#d5d5d5"/><stop offset="0.40" stop-color="#dadada"/><stop offset="0.60" stop-color="#dedede"/><stop offset="0.80" stop-color="#e2e2e2"/><stop offset="1.00" stop-color="#e6e6e6"/></linearGradient><linearGradient id="g_left" gradientUnits="userSpaceOnUse" x1="205.0" y1="256.2" x2="233.7" y2="246.0"><stop offset="0.00" stop-color="#888888"/><stop offset="0.20" stop-color="#9d9d9d"/><stop offset="0.40" stop-color="#ababab"/><stop offset="0.60" stop-color="#b7b7b7"/><stop offset="0.80" stop-color="#c1c1c1"/><stop offset="1.00" stop-color="#c9c9c9"/></linearGradient><linearGradient id="g_lowleft" gradientUnits="userSpaceOnUse" x1="233.6" y1="306.5" x2="237.5" y2="302.0"><stop offset="0.00" stop-color="#8e8e8e"/><stop offset="0.20" stop-color="#929292"/><stop offset="0.40" stop-color="#959595"/><stop offset="0.60" stop-color="#989898"/><stop offset="0.80" stop-color="#9c9c9c"/><stop offset="1.00" stop-color="#9f9f9f"/></linearGradient><linearGradient id="g_rightedge" gradientUnits="userSpaceOnUse" x1="426.9" y1="221.8" x2="392.5" y2="221.7"><stop offset="0.00" stop-color="#000000"/><stop offset="0.20" stop-color="#090909"/><stop offset="0.40" stop-color="#292929"/><stop offset="0.60" stop-color="#414141"/><stop offset="0.80" stop-color="#545454"/><stop offset="1.00" stop-color="#656565"/></linearGradient><linearGradient id="g_rightlow" gradientUnits="userSpaceOnUse" x1="409.4" y1="281.1" x2="392.7" y2="272.2"><stop offset="0.00" stop-color="#0c0c0c"/><stop offset="0.20" stop-color="#181818"/><stop offset="0.40" stop-color="#242424"/><stop offset="0.60" stop-color="#2f2f2f"/><stop offset="0.80" stop-color="#3a3a3a"/><stop offset="1.00" stop-color="#444444"/></linearGradient><linearGradient id="g_botright" gradientUnits="userSpaceOnUse" x1="350.8" y1="344.9" x2="346.3" y2="332.3"><stop offset="0.00" stop-color="#060606"/><stop offset="0.20" stop-color="#0b0b0b"/><stop offset="0.40" stop-color="#0f0f0f"/><stop offset="0.60" stop-color="#131313"/><stop offset="0.80" stop-color="#181818"/><stop offset="1.00" stop-color="#1f1f1f"/></linearGradient><linearGradient id="g_topstrip" gradientUnits="userSpaceOnUse" x1="341.5" y1="135.0" x2="335.4" y2="149.5"><stop offset="0.00" stop-color="#878787"/><stop offset="0.20" stop-color="#8d8d8d"/><stop offset="0.40" stop-color="#9a9a9a"/><stop offset="0.60" stop-color="#a5a5a5"/><stop offset="0.80" stop-color="#adadad"/><stop offset="1.00" stop-color="#b5b5b5"/></linearGradient><radialGradient id="rim" cx="316.5" cy="245.2" r="108.8" gradientUnits="userSpaceOnUse"><stop offset="0.9" stop-color="#000" stop-opacity="0"/><stop offset="1" stop-color="#000" stop-opacity="0.0"/></radialGradient></defs><filter id="bb" x="-3%" y="-3%" width="106%" height="106%"><feGaussianBlur stdDeviation="0.4"/></filter><g filter="url(#bb)"><g clip-path="url(#bc)"><rect x="200" y="130" width="235" height="235" fill="#909090"/><path d="M250.3 176.7Q263.8 178.8 282.0 187.0Q282.5 206.5 286.0 229.5Q269.4 246.3 257.0 263.0Q237.6 258.7 225.0 253.3Q216.4 230.8 218.7 209.8Q230.0 190.4 250.3 176.7Z" fill="url(#g_lefthex)" stroke="url(#g_lefthex)" stroke-width="0.6"/><path d="M282.0 187.0Q303.2 175.2 325.6 170.0Q341.2 183.1 354.7 201.5Q344.3 219.1 331.3 239.0Q308.3 233.7 286.0 229.5Q282.5 206.5 282.0 187.0Z" fill="url(#g_toppent)" stroke="url(#g_toppent)" stroke-width="0.6"/><path d="M286.0 229.5Q308.3 233.7 331.3 239.0Q340.4 261.7 347.2 282.8Q333.8 300.9 318.9 314.4Q294.9 314.0 272.8 307.3Q262.2 287.2 257.0 263.0Q269.4 246.3 286.0 229.5Z" fill="url(#g_center)" stroke="url(#g_center)" stroke-width="0.6"/><path d="M354.7 201.5Q377.5 202.6 394.5 207.8Q405.6 227.9 409.2 249.5Q401.9 269.3 387.1 286.9Q369.7 286.8 347.2 282.8Q340.4 261.7 331.3 239.0Q344.3 219.1 354.7 201.5Z" fill="url(#g_righthex)" stroke="url(#g_righthex)" stroke-width="0.6"/><path d="M257.0 263.0Q262.2 287.2 272.8 307.3Q260.8 315.9 252.4 319.8Q230.5 307.9 218.7 288.7Q216.0 272.6 225.0 253.3Q237.6 258.7 257.0 263.0Z" fill="url(#g_llpent)" stroke="url(#g_llpent)" stroke-width="0.6"/><path d="M272.8 307.3Q294.9 314.0 318.9 314.4Q329.5 330.8 339.0 339.3Q332.0 349.2 324.0 352.5L326.7 391.7L291.0 389.8L243.1 372.4L220.8 356.6L252.4 319.8Q260.8 315.9 272.8 307.3Z" fill="url(#g_bottom)" stroke="url(#g_bottom)" stroke-width="0.6"/><path d="M347.2 282.8Q369.7 286.8 387.1 286.9Q387.6 307.0 381.8 321.6Q362.5 334.6 339.0 339.3Q329.5 330.8 318.9 314.4Q333.8 300.9 347.2 282.8Z" fill="url(#g_lrpent)" stroke="url(#g_lrpent)" stroke-width="0.6"/><path d="M255.1 156.7Q250.2 163.6 250.3 176.7Q263.8 178.8 282.0 187.0Q303.2 175.2 325.6 170.0Q329.2 154.2 331.7 145.8Q321.8 138.7 311.7 137.3L310.0 98.5L266.3 107.2L243.1 118.0L232.8 124.5L255.1 156.7Z" fill="url(#g_topleft)" stroke="url(#g_topleft)" stroke-width="0.6"/><path d="M325.6 170.0Q329.2 154.2 331.7 145.8Q351.6 142.0 368.4 148.5L386.0 115.8L410.9 132.7L432.7 155.3L398.7 181.6Q399.8 192.7 394.5 207.8Q377.5 202.6 354.7 201.5Q341.2 183.1 325.6 170.0Z" fill="url(#g_topright)" stroke="url(#g_topright)" stroke-width="0.6"/><path d="M255.1 156.7L232.8 124.5L204.0 150.8L183.4 183.1L178.4 195.2L218.7 209.8Q230.0 190.4 250.3 176.7Q250.2 163.6 255.1 156.7Z" fill="url(#g_upleft)" stroke="url(#g_upleft)" stroke-width="0.6"/><path d="M218.7 209.8L178.4 195.2L170.2 258.0L174.6 283.2L182.3 304.9L218.7 288.7Q216.0 272.6 225.0 253.3Q216.4 230.8 218.7 209.8Z" fill="url(#g_left)" stroke="url(#g_left)" stroke-width="0.6"/><path d="M218.7 288.7L182.3 304.9L204.0 339.6L220.8 356.6L252.4 319.8Q230.5 307.9 218.7 288.7Z" fill="url(#g_lowleft)" stroke="url(#g_lowleft)" stroke-width="0.6"/><path d="M398.7 181.6L432.7 155.3L454.5 195.0L463.3 249.0L424.8 248.0Q422.4 248.9 409.2 249.5Q405.6 227.9 394.5 207.8Q399.8 192.7 398.7 181.6Z" fill="url(#g_rightedge)" stroke="url(#g_rightedge)" stroke-width="0.6"/><path d="M424.8 248.0L463.3 249.0L454.5 295.4L436.8 329.4L411.9 356.9L381.8 321.6Q387.6 307.0 387.1 286.9Q401.9 269.3 409.2 249.5Q422.4 248.9 424.8 248.0Z" fill="url(#g_rightlow)" stroke="url(#g_rightlow)" stroke-width="0.6"/><path d="M381.8 321.6L411.9 356.9L389.9 372.4L354.5 387.1L326.7 391.7L324.0 352.5Q332.0 349.2 339.0 339.3Q362.5 334.6 381.8 321.6Z" fill="url(#g_botright)" stroke="url(#g_botright)" stroke-width="0.6"/><path d="M331.7 145.8Q351.6 142.0 368.4 148.5L386.0 115.8L354.5 103.3L310.0 98.5L311.7 137.3Q321.8 138.7 331.7 145.8Z" fill="url(#g_topstrip)" stroke="url(#g_topstrip)" stroke-width="0.6"/><filter id="sb" x="-5%%" y="-5%%" width="110%%" height="110%%"><feGaussianBlur stdDeviation="0.45"/></filter><g filter="url(#sb)"><g fill="none" stroke-linecap="butt"><path d="M250.0 177.7Q263.4 179.8 281.7 188.0" stroke="#fafafa" stroke-width="1.5"/><path d="M282.4 188.0Q303.6 176.3 326.0 171.0" stroke="#fafafa" stroke-width="2.0"/><path d="M326.8 170.3Q330.3 154.5 332.9 146.1" stroke="#ebebeb" stroke-width="2.0"/><path d="M326.4 169.3Q342.0 182.4 355.5 200.8" stroke="#f5f5f5" stroke-width="3.0"/><path d="M354.5 202.6Q377.4 203.7 394.3 208.9" stroke="#e6e6e6" stroke-width="2.0"/><path d="M395.7 208.0Q401.1 192.9 399.9 181.8" stroke="#e1e1e1" stroke-width="3.5"/><path d="M331.6 146.6Q351.6 142.8 368.3 149.3" stroke="#e6e6e6" stroke-width="2.0"/><path d="M331.4 146.6Q321.5 139.5 311.4 138.1" stroke="#fafafa" stroke-width="2.5"/><path d="M355.7 202.1Q345.3 219.7 332.3 239.6" stroke="#f0f0f0" stroke-width="3.0"/><path d="M331.1 240.0Q308.1 234.8 285.8 230.5" stroke="#fafafa" stroke-width="1.5"/><path d="M286.9 229.4Q283.4 206.4 282.9 186.9" stroke="#fafafa" stroke-width="1.0"/><path d="M286.7 230.1Q270.1 246.9 257.7 263.6" stroke="#fafafa" stroke-width="1.5"/><path d="M256.7 264.0Q237.3 259.7 224.7 254.3" stroke="#f5f5f5" stroke-width="2.5"/><path d="M225.8 253.2Q217.2 230.6 219.5 209.7" stroke="#f8f8f8" stroke-width="2.2"/><path d="M219.2 210.3Q230.5 190.9 250.8 177.2" stroke="#fafafa" stroke-width="2.0"/><path d="M395.5 207.4Q406.7 227.5 410.2 249.1" stroke="#dadada" stroke-width="3.0"/><path d="M409.3 250.4Q422.5 249.8 424.9 248.9" stroke="#bebebe" stroke-width="2.0"/><path d="M410.1 250.1Q402.9 269.8 388.0 287.5" stroke="#f0f0f0" stroke-width="3.0"/><path d="M387.0 287.8Q369.6 287.7 347.1 283.7" stroke="#d2d2d2" stroke-width="2.0"/><path d="M348.2 282.4Q341.4 261.3 332.3 238.6" stroke="#c8c8c8" stroke-width="2.5"/><path d="M348.2 283.7Q334.8 301.8 319.9 315.3" stroke="#f5f5f5" stroke-width="4.0"/><path d="M318.7 315.9Q294.6 315.6 272.6 308.8" stroke="#f0f0f0" stroke-width="4.5"/><path d="M273.8 306.9Q263.2 286.9 258.0 262.6" stroke="#e6e6e6" stroke-width="2.5"/><path d="M273.2 308.0Q261.2 316.6 252.8 320.5" stroke="#c8c8c8" stroke-width="1.5"/><path d="M253.2 319.0Q231.3 307.1 219.5 287.9" stroke="#e1e1e1" stroke-width="3.5"/><path d="M219.6 288.9Q216.9 272.8 225.9 253.5" stroke="#ebebeb" stroke-width="2.5"/><path d="M319.8 313.6Q330.5 330.0 339.9 338.5" stroke="#8c8c8c" stroke-width="3.0"/><path d="M339.4 340.4Q363.0 335.6 382.2 322.7" stroke="#f0f0f0" stroke-width="3.2"/><path d="M382.9 321.8Q388.7 307.2 388.2 287.1" stroke="#ebebeb" stroke-width="3.0"/><path d="M339.8 340.3Q332.8 350.2 324.8 353.5" stroke="#cdcdcd" stroke-width="3.6"/><path d="M219.1 209.3Q216.0 206.7 212.9 204.0" stroke="#f0f0f0" stroke-width="1.5"/><path d="M382.3 321.2Q384.7 324.1 387.0 327.1" stroke="#969696" stroke-width="1.5"/><path d="M252.9 320.1Q251.5 322.5 250.0 324.8" stroke="#c8c8c8" stroke-width="1.0"/><path d="M399.2 182.2Q400.9 180.6 402.5 179.1" stroke="#c8c8c8" stroke-width="2.0"/></g><g fill="none" stroke-linecap="round"><path d="M254.4 156.5Q249.5 163.4 249.6 176.5" stroke="#8c8c8c" stroke-width="2.5"/><path d="M250.7 175.6Q264.1 177.7 282.4 185.9" stroke="#737373" stroke-width="3.0"/><path d="M281.6 185.9Q302.8 174.2 325.2 168.9" stroke="#8c8c8c" stroke-width="2.5"/><path d="M324.3 169.7Q327.9 153.9 330.4 145.5" stroke="#191919" stroke-width="3.0"/><path d="M324.9 170.6Q340.5 183.7 354.0 202.1" stroke="#6e6e6e" stroke-width="1.0"/><path d="M354.9 200.4Q377.7 201.5 394.7 206.7" stroke="#323232" stroke-width="2.5"/><path d="M393.5 207.6Q398.8 192.5 397.7 181.4" stroke="#3c3c3c" stroke-width="1.0"/><path d="M331.7 145.2Q351.7 141.4 368.4 147.9" stroke="#787878" stroke-width="0.8"/><path d="M332.0 145.2Q322.1 138.1 312.0 136.7" stroke="#787878" stroke-width="0.6"/><path d="M353.8 200.9Q343.4 218.5 330.4 238.4" stroke="#1e1e1e" stroke-width="1.5"/><path d="M331.5 237.8Q308.5 232.6 286.2 228.3" stroke="#141414" stroke-width="3.0"/><path d="M284.8 229.6Q281.3 206.6 280.8 187.1" stroke="#4b4b4b" stroke-width="3.2"/><path d="M285.2 228.8Q268.6 245.6 256.2 262.3" stroke="#0f0f0f" stroke-width="2.6"/><path d="M257.3 262.1Q237.8 257.8 225.3 252.4" stroke="#2d2d2d" stroke-width="1.5"/><path d="M224.3 253.4Q215.7 230.9 218.0 209.9" stroke="#6e6e6e" stroke-width="0.8"/><path d="M218.2 209.4Q229.5 189.9 249.8 176.3" stroke="#828282" stroke-width="0.8"/><path d="M393.7 208.1Q404.8 228.2 408.4 249.8" stroke="#3c3c3c" stroke-width="1.0"/><path d="M409.1 248.7Q422.3 248.1 424.7 247.2" stroke="#141414" stroke-width="1.5"/><path d="M408.4 249.0Q401.1 268.8 386.3 286.4" stroke="#282828" stroke-width="1.0"/><path d="M387.2 286.1Q369.8 286.0 347.3 282.0" stroke="#282828" stroke-width="1.5"/><path d="M346.3 283.1Q339.5 262.0 330.4 239.3" stroke="#191919" stroke-width="1.5"/><path d="M346.4 282.1Q332.9 300.2 318.1 313.7" stroke="#1e1e1e" stroke-width="1.0"/><path d="M319.1 313.2Q295.0 312.8 273.0 306.1" stroke="#282828" stroke-width="1.0"/><path d="M271.9 307.6Q261.4 287.5 256.1 263.3" stroke="#6e6e6e" stroke-width="1.5"/><path d="M272.3 306.5Q260.3 315.1 251.9 319.0" stroke="#141414" stroke-width="2.0"/><path d="M251.8 320.4Q229.9 308.6 218.1 289.3" stroke="#646464" stroke-width="0.5"/><path d="M218.0 288.6Q215.3 272.5 224.3 253.2" stroke="#787878" stroke-width="0.8"/><path d="M318.1 315.1Q328.7 331.4 338.2 340.0" stroke="#1e1e1e" stroke-width="1.5"/><path d="M338.6 338.4Q362.2 333.7 381.4 320.7" stroke="#1e1e1e" stroke-width="1.0"/><path d="M380.9 321.5Q386.7 306.9 386.2 286.8" stroke="#1e1e1e" stroke-width="1.0"/><path d="M338.3 338.5Q331.3 348.4 323.3 351.7" stroke="#1e1e1e" stroke-width="1.0"/><path d="M218.3 210.2Q215.2 207.6 212.1 204.9" stroke="#828282" stroke-width="0.8"/><path d="M381.3 322.0Q383.7 324.9 386.0 327.9" stroke="#141414" stroke-width="1.0"/><path d="M251.8 319.5Q250.4 321.8 248.9 324.2" stroke="#282828" stroke-width="1.5"/><path d="M398.3 181.1Q399.9 179.6 401.6 178.0" stroke="#3c3c3c" stroke-width="0.8"/></g></g><ellipse cx="316.5" cy="245.2" rx="108.8" ry="108.8" fill="url(#rim)"/></g></g><g stroke="#84867e" stroke-width="0.9" fill="none"><path d="M67.6 365.5L70.4 386L55.5 387.6"/><path d="M69.6 379L70.4 386" stroke="#9c9c88"/></g><g fill="#84867e" font-size="7.6" font-weight="bold" fill-opacity="0.9" font-family="Liberation Sans, sans-serif"><text x="69.7" y="367.4">x</text><text x="73" y="380.6">z</text><text x="50.6" y="389.4">y</text></g></svg><div class="lab">Perspective</div></div>
<div id="sb" class="abs"><div class="sbox " style="left:7px;width:39.5px;padding-left:3.2px">CPlane</div><div class="sbox " style="left:50px;width:136px;padding-left:1.7px">x 33.521&nbsp;&nbsp; y -53.398&nbsp; z 0</div><div class="sbox " style="left:189px;width:36px;padding-left:4px"></div><div class="sbox " style="left:227.5px;width:127px;padding-left:1.5px"><span style="display:inline-block;width:9px;height:9px;background:#000;vertical-align:-1.5px;margin-right:2.5px"></span>Default</div><div class="sbox dis" style="left:356.5px;width:28px;padding-left:1.7px">Snap</div><div class="sbox dis" style="left:386px;width:28.5px;padding-left:1.8px">Ortho</div><div class="sbox dis" style="left:416px;width:33.5px;padding-left:1px">Planar</div><div class="sbox " style="left:451px;width:37px;padding-left:2.5px">Osnap</div></div>
<div id="tk" class="abs"><div class="kbtn " style="left:2px;width:37px"><svg class="abs" style="left:1px;top:1px" width="13" height="12" viewBox="0 0 13 12"><path d="M1 2.5h2M1 4.5h2M1 6.5h2M1 8.5h2" stroke="#333" stroke-width="0.8"/><path d="M3.5 2Q6 0.5 8 2V5.5Q6 4 3.5 5.5Z" fill="#e03020"/><path d="M8.3 2Q10.5 3.5 12.5 2V5.5Q10.5 7 8.3 5.5Z" fill="#20a030"/><path d="M3.5 6Q6 4.5 8 6V9.5Q6 8 3.5 9.5Z" fill="#2040d0"/><path d="M8.3 6Q10.5 7.5 12.5 6V9.5Q10.5 11 8.3 9.5Z" fill="#e8c820"/><path d="M3.3 1.5V10M8.1 1.8V9.8" stroke="#111" stroke-width="0.7"/></svg><span style="left:15.5px"><b style="font-weight:bold;font-size:9px;letter-spacing:0">开始</b></span></div><div class="abs" style="left:43.5px;top:3px;width:2px;height:15px;border-left:1px solid #808080;border-right:1px solid #fff"></div><div class="abs" style="left:46.5px;top:4px;width:3px;height:13px;border:1px solid;border-color:#fff #808080 #808080 #fff"></div><svg class="abs" style="left:52px;top:3px" width="14" height="14" viewBox="0 0 14 14"><circle cx="7" cy="7.4" r="4.6" fill="none" stroke="#2a60d8" stroke-width="2.2"/><path d="M3 7.4h8" stroke="#2a60d8" stroke-width="1.6"/><path d="M7.5 9.5h4.5v2H7.5Z" fill="#d4d0c8"/><path d="M1.5 9.5Q6 1 13 2.5" stroke="#f0b020" stroke-width="1.1" fill="none"/></svg><svg class="abs" style="left:68.5px;top:3.5px" width="13" height="13" viewBox="0 0 13 13"><rect x="1.5" y="2.5" width="9" height="9" fill="#fff" stroke="#222" stroke-width="0.9"/><path d="M3.5 9L6 7.5L11.5 1.5" stroke="#c08020" stroke-width="1.6" fill="none"/><path d="M2 2.5h8" stroke="#3050c0" stroke-width="1.6"/></svg><svg class="abs" style="left:85px;top:3.5px" width="13" height="13" viewBox="0 0 13 13"><rect x="1" y="1" width="11" height="11" fill="#207020"/><rect x="2.2" y="2.2" width="3.8" height="3.8" fill="#f0e020"/><rect x="7" y="2.2" width="3.8" height="3.8" fill="#e03030"/><rect x="2.2" y="7" width="3.8" height="3.8" fill="#30c030"/><rect x="7" y="7" width="3.8" height="3.8" fill="#f0e020"/></svg><svg class="abs" style="left:102px;top:3.5px" width="14" height="13" viewBox="0 0 14 13"><path d="M2 11.5V2.5L8 11.5Z" fill="#f0d020" stroke="#a02020" stroke-width="0.9"/><circle cx="8.5" cy="6.5" r="2.6" fill="#e8e8ff" stroke="#2040b0" stroke-width="1"/><path d="M10.3 8.5L13 11.5" stroke="#a02020" stroke-width="1.4"/></svg><svg class="abs" style="left:121px;top:3.5px" width="14" height="13" viewBox="0 0 14 13"><path d="M1.5 11.5L7 2L12.5 11.5Z" fill="#f8e8a0" stroke="#c09020" stroke-width="1"/><path d="M5 9L9.5 6" stroke="#c02020" stroke-width="1.2"/><circle cx="9.8" cy="4" r="1.5" fill="#e04020"/></svg><div class="abs" style="left:141.5px;top:3px;width:2px;height:15px;border-left:1px solid #808080;border-right:1px solid #fff"></div><div class="abs" style="left:144.5px;top:4px;width:3px;height:13px;border:1px solid;border-color:#fff #808080 #808080 #fff"></div><div class="kbtn dn" style="left:149px;width:60px"><svg class="abs" style="left:2px;top:2px" width="11" height="11" viewBox="0 0 11 11"><rect width="11" height="11" fill="#181820"/><path d="M1.5 2.5L4.5 4.5L7.5 2L9.5 3L8 5.5L9 8.5L5.5 9.5L2.5 7.5Z" fill="#d0d0d0"/></svg><span style="left:15px">Rhinocer...</span></div><div class="kbtn " style="left:214px;width:60px"><svg class="abs" style="left:2px;top:2px" width="11" height="11" viewBox="0 0 11 11"><rect width="11" height="11" fill="#e8e4dc" stroke="#444" stroke-width="0.8"/><circle cx="5.5" cy="5.5" r="3" fill="#8a2020"/><circle cx="5.5" cy="5.5" r="1.3" fill="#101010"/></svg><span style="left:14px">Adobe Ph...</span></div><div class="kbtn " style="left:278px;width:59.5px"><svg class="abs" style="left:1px;top:2px" width="12" height="11" viewBox="0 0 12 11"><path d="M2.5 2.5L8.5 1L10.5 8L4 10Z" fill="#fff" stroke="#2848a0" stroke-width="0.9"/><path d="M4.5 4.5L8 3.6M5 6.3L8.6 5.4" stroke="#6080c0" stroke-width="0.7"/></svg><span style="left:12.3px">新建 文...</span></div><div class="kbtn " style="left:341px;width:61.5px"><svg class="abs" style="left:2px;top:2.5px" width="12" height="10" viewBox="0 0 12 10"><path d="M0.8 2.2h3.6l1 1.2h5.8v5.8H0.8Z" fill="#f0dc60" stroke="#6a5a10" stroke-width="0.8"/><path d="M0.8 4.6h10.4" stroke="#fff8b0" stroke-width="0.8"/></svg><span style="left:14.5px">My eBooks</span></div><div class="abs" style="left:474px;top:2px;width:124px;height:16.5px;border:1px solid;border-color:#808080 #fff #fff #808080"></div><svg class="abs" style="left:476.5px;top:4.5px" width="11" height="12" viewBox="0 0 11 12"><rect x="0.5" y="0.5" width="10" height="11" fill="#208080"/><path d="M3 2v8M5.5 4v6M8 2v8" stroke="#f8f8a0" stroke-width="1.2"/></svg><div class="abs" style="left:489px;top:4.5px;width:13.5px;height:11.5px;background:#1828a0;color:#fff;font-size:7.5px;line-height:11.5px;text-align:center;font-weight:bold;letter-spacing:-0.3px">CH</div><svg class="abs" style="left:504px;top:4.5px" width="12" height="12" viewBox="0 0 12 12"><path d="M1 1.5h10v5Q11 10 6 11.5Q1 10 1 6.5Z" fill="#b01818" stroke="#401010" stroke-width="0.8"/><path d="M6 3v6M3.5 5.5h5" stroke="#fff" stroke-width="1.4"/></svg><svg class="abs" style="left:517.5px;top:4.5px" width="12" height="12" viewBox="0 0 12 12"><rect x="0.5" y="0.5" width="11" height="11" fill="#3848d0"/><path d="M0.5 3h11M0.5 5.5h11M0.5 8h11M3 .5v11M5.5 .5v11M8 .5v11" stroke="#c0c8ff" stroke-width="0.6"/></svg><div class="abs" style="left:530.5px;top:3.5px;width:13.5px;height:7px;background:#d81818;color:#fff;font-size:6.2px;line-height:7px;font-weight:bold;text-align:center;letter-spacing:-0.4px;overflow:hidden">中文</div><div class="abs" style="left:530.5px;top:9.2px;width:13.5px;height:8px;color:#1020c8;font-size:9px;line-height:8px;font-weight:bold;text-align:center;letter-spacing:0.2px">cn</div><svg class="abs" style="left:544.5px;top:4.5px" width="13" height="12" viewBox="0 0 13 12"><path d="M1.5 10.5L5 2L9 10.5Z" fill="#f0d020" stroke="#806010" stroke-width="0.8"/><circle cx="8.5" cy="5" r="2.3" fill="#d02020"/><path d="M8 8L12 11" stroke="#2040c0" stroke-width="1.5"/></svg><div class="abs" style="left:567.5px;top:5px;font-size:8.3px;line-height:11px;color:#000">14:48</div></div>
</div></body></html>
